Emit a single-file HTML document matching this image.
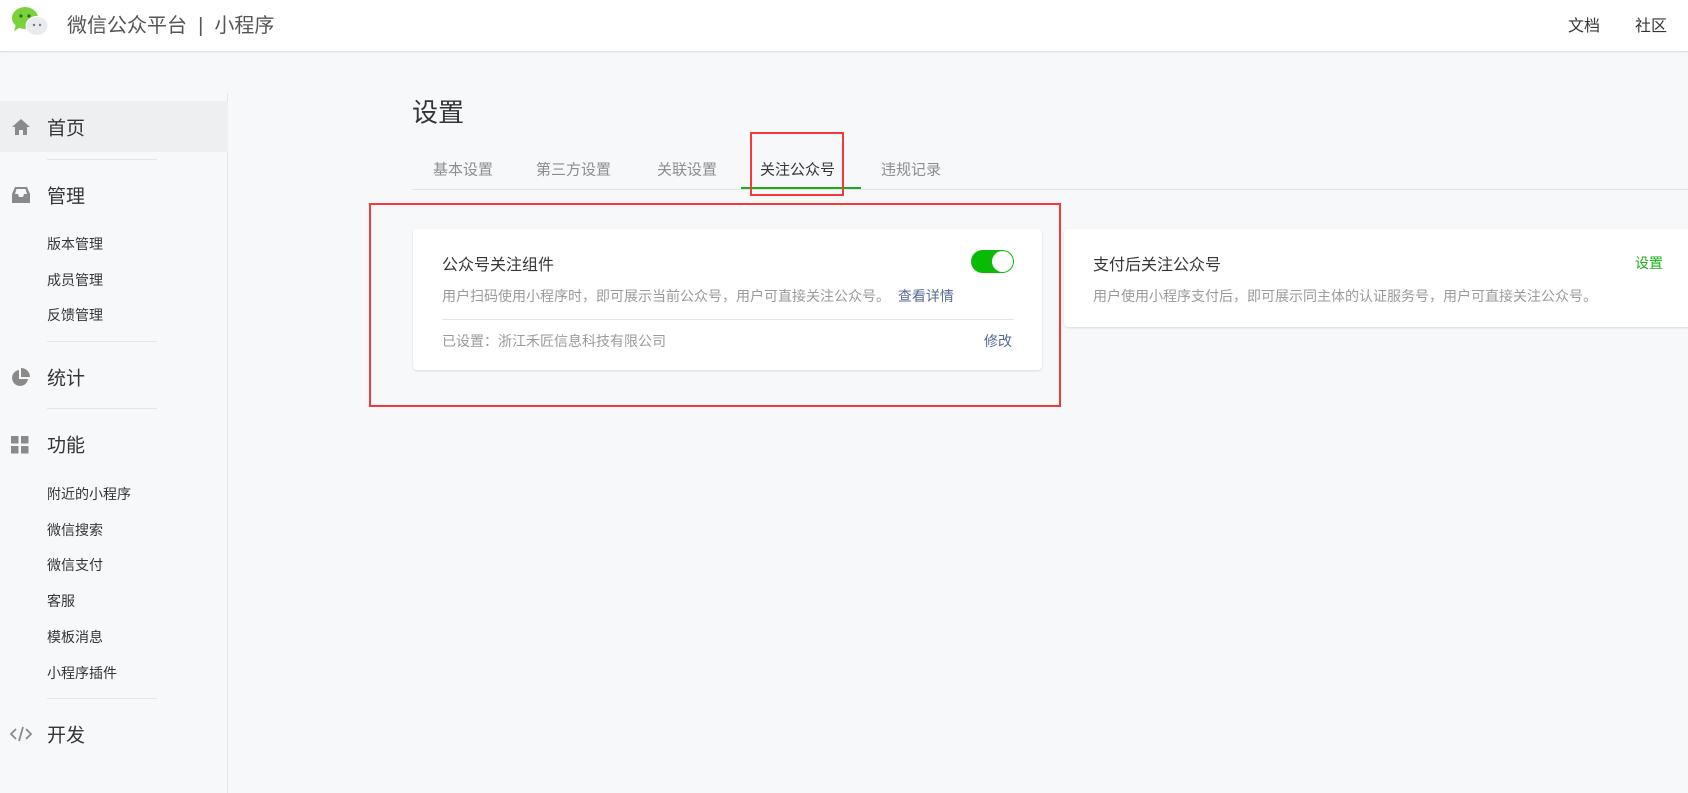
<!DOCTYPE html>
<html><head><meta charset="utf-8"><style>
*{margin:0;padding:0;box-sizing:border-box}
body{width:1688px;height:748px;overflow:hidden;background:#f7f8fa;font-family:"Liberation Sans","Noto Sans CJK SC",sans-serif;position:relative;color:#353535}
.a{position:absolute;white-space:nowrap}
.hd{position:absolute;left:0;top:0;width:1688px;height:52px;background:#fff;border-bottom:1px solid #e2e2e2;box-shadow:0 1px 2px rgba(0,0,0,.05)}
.side{position:absolute;left:0;top:93px;width:228px;height:700px;border-right:1px solid #e5e5e5}
.m{font-size:19px;color:#353535;transform:translateY(-50%)}
.s{font-size:14px;color:#353535;transform:translateY(-50%)}
.dv{position:absolute;left:47px;width:110px;height:1px;background:#e5e5e5}
.t{font-size:15px;color:#8d8d8d;transform:translateY(-50%)}
.card{position:absolute;background:#fff;border-radius:4px;box-shadow:0 1px 2px rgba(0,0,0,.12)}
</style></head><body>
<div class="hd"></div>
<svg class="a" style="left:11px;top:6px" width="38" height="30" viewBox="0 0 38 30">
<ellipse cx="14" cy="12" rx="13" ry="11" fill="#7bd13a"/><path d="M5 19 L3 25 L10 21Z" fill="#7bd13a"/>
<circle cx="10" cy="10" r="1.6" fill="#2e6a12"/><circle cx="18" cy="10" r="1.6" fill="#2e6a12"/>
<ellipse cx="26" cy="20" rx="11" ry="9.5" fill="#e9ebef" stroke="#fff"/><circle cx="23" cy="19" r="1.2" fill="#777"/><circle cx="29" cy="19" r="1.2" fill="#777"/>
</svg>
<div class="a" style="left:67px;top:9px;font-size:20px;color:#555">微信公众平台&nbsp;&nbsp;|&nbsp;&nbsp;小程序</div>
<div class="a" style="left:1568px;top:12px;font-size:16px">文档</div>
<div class="a" style="left:1635px;top:12px;font-size:16px">社区</div>

<div class="side"></div>
<div class="a" style="left:0;top:101px;width:228px;height:51px;background:#eeeff1"></div>
<svg class="a" style="left:11px;top:118px" width="20" height="18" viewBox="0 0 20 18"><path d="M10 1 L19 9 L16 9 L16 17 L12 17 L12 12 L8 12 L8 17 L4 17 L4 9 L1 9Z" fill="#8a8a8a"/></svg>
<div class="a m" style="left:47px;top:127px">首页</div>
<div class="dv" style="top:159px"></div>
<svg class="a" style="left:11px;top:186px" width="20" height="18" viewBox="0 0 20 18"><path d="M1 8 L4 1 L16 1 L19 8 L19 17 L1 17Z M4 8 L7 8 L8 11 L12 11 L13 8 L16 8 L14.5 3 L5.5 3Z" fill="#8a8a8a" fill-rule="evenodd"/></svg>
<div class="a m" style="left:47px;top:195px">管理</div>
<div class="a s" style="left:47px;top:244px">版本管理</div>
<div class="a s" style="left:47px;top:280px">成员管理</div>
<div class="a s" style="left:47px;top:315px">反馈管理</div>
<div class="dv" style="top:341px"></div>
<svg class="a" style="left:11px;top:368px" width="19" height="19" viewBox="0 0 19 19"><path d="M8 2 A8 8 0 1 0 17 11 L8 11Z" fill="#8a8a8a"/><path d="M10 0 L10 9 L19 9 A9 9 0 0 0 10 0Z" fill="#8a8a8a"/></svg>
<div class="a m" style="left:47px;top:377px">统计</div>
<div class="dv" style="top:408px"></div>
<svg class="a" style="left:11px;top:436px" width="18" height="18" viewBox="0 0 18 18" fill="#8a8a8a"><rect width="7.5" height="7.5"/><rect x="10" width="7.5" height="7.5"/><rect y="10" width="7.5" height="7.5"/><rect x="10" y="10" width="7.5" height="7.5"/></svg>
<div class="a m" style="left:47px;top:444px">功能</div>
<div class="a s" style="left:47px;top:494px">附近的小程序</div>
<div class="a s" style="left:47px;top:530px">微信搜索</div>
<div class="a s" style="left:47px;top:565px">微信支付</div>
<div class="a s" style="left:47px;top:601px">客服</div>
<div class="a s" style="left:47px;top:637px">模板消息</div>
<div class="a s" style="left:47px;top:673px">小程序插件</div>
<div class="dv" style="top:698px"></div>
<svg class="a" style="left:10px;top:726px" width="22" height="16" viewBox="0 0 22 16" fill="none" stroke="#8a8a8a" stroke-width="1.8"><path d="M6 3 L1 8 L6 13 M16 3 L21 8 L16 13 M13 1 L9 15"/></svg>
<div class="a m" style="left:47px;top:734px">开发</div>

<div class="a" style="left:412px;top:111px;font-size:26px;color:#353535;transform:translateY(-50%)">设置</div>
<div class="a" style="left:412px;top:189px;width:1276px;height:1px;background:#e2e2e2"></div>
<div class="a t" style="left:433px;top:169px">基本设置</div>
<div class="a t" style="left:536px;top:169px">第三方设置</div>
<div class="a t" style="left:657px;top:169px">关联设置</div>
<div class="a t" style="left:760px;top:169px;color:#353535">关注公众号</div>
<div class="a t" style="left:881px;top:169px">违规记录</div>
<div class="a" style="left:741px;top:187px;width:120px;height:2px;background:#1aad19"></div>
<div class="a" style="left:750px;top:132px;width:94px;height:64px;border:2px solid #f23a3a"></div>

<div class="card" style="left:413px;top:229px;width:629px;height:141px">
<div class="a" style="left:29px;top:34px;font-size:16px;transform:translateY(-50%)">公众号关注组件</div>
<div class="a" style="left:558px;top:21px;width:43px;height:23px;border-radius:12px;background:#09bb07"></div>
<div class="a" style="left:579px;top:22px;width:21px;height:21px;border-radius:50%;background:#fff"></div>
<div class="a" style="left:29px;top:67px;font-size:14px;color:#9a9a9a;transform:translateY(-50%)">用户扫码使用小程序时，即可展示当前公众号，用户可直接关注公众号。 <span style="color:#576b95;margin-left:4px">查看详情</span></div>
<div class="a" style="left:29px;top:90px;width:572px;height:1px;background:#e5e5e5"></div>
<div class="a" style="left:29px;top:112px;font-size:14px;color:#9a9a9a;transform:translateY(-50%)">已设置：浙江禾匠信息科技有限公司</div>
<div class="a" style="left:571px;top:112px;font-size:14px;color:#576b95;transform:translateY(-50%)">修改</div>
</div>

<div class="card" style="left:1064px;top:229px;width:640px;height:98px">
<div class="a" style="left:29px;top:34px;font-size:16px;transform:translateY(-50%)">支付后关注公众号</div>
<div class="a" style="left:571px;top:34px;font-size:14px;color:#1aad19;transform:translateY(-50%)">设置</div>
<div class="a" style="left:29px;top:67px;font-size:14px;color:#9a9a9a;transform:translateY(-50%)">用户使用小程序支付后，即可展示同主体的认证服务号，用户可直接关注公众号。</div>
</div>

<div class="a" style="left:369px;top:203px;width:692px;height:204px;border:2px solid #f23a3a"></div>
</body></html>
